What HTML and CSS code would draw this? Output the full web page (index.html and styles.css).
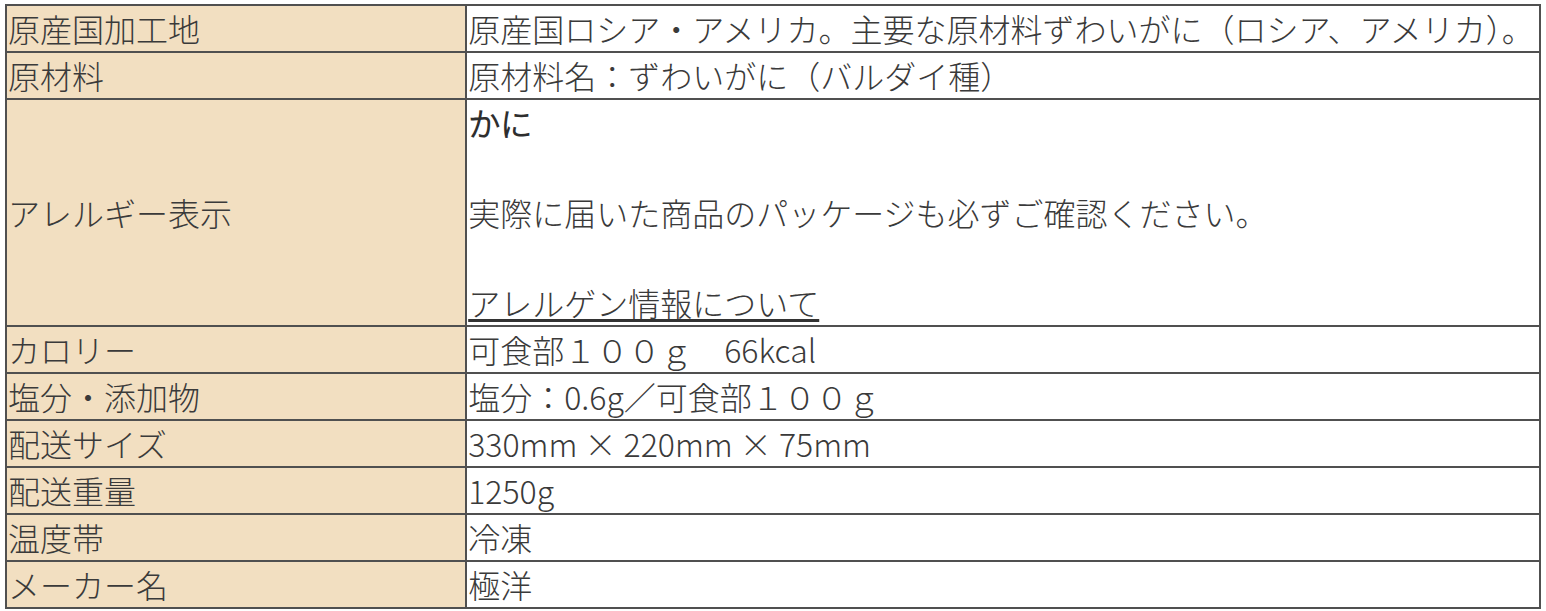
FILE: index.html
```html
<!DOCTYPE html>
<html lang="ja">
<head>
<meta charset="utf-8">
<title>商品情報</title>
<link rel="stylesheet" href="styles.css">
</head>
<body>
<table class="spec">
  <tbody>
    <tr><th class="label">原産国加工地</th><td class="value">原産国ロシア・アメリカ。主要な原材料ずわいがに（ロシア、アメリカ）。</td></tr>
    <tr><th class="label">原材料</th><td class="value">原材料名：ずわいがに（バルダイ種）</td></tr>
    <tr><th class="label">アレルギー表示</th><td class="value"><strong class="allergen">かに</strong><br><br>実際に届いた商品のパッケージも必ずご確認ください。<br><br><a class="link" href="#">アレルゲン情報について</a></td></tr>
    <tr><th class="label">カロリー</th><td class="value">可食部１００ｇ　66kcal</td></tr>
    <tr><th class="label">塩分・添加物</th><td class="value">塩分：0.6g／可食部１００ｇ</td></tr>
    <tr><th class="label">配送サイズ</th><td class="value">330mm × 220mm × 75mm</td></tr>
    <tr><th class="label">配送重量</th><td class="value">1250g</td></tr>
    <tr><th class="label">温度帯</th><td class="value">冷凍</td></tr>
    <tr><th class="label">メーカー名</th><td class="value">極洋</td></tr>
  </tbody>
</table>
</body>
</html>
```

FILE: styles.css
```css
html, body {
  margin: 0;
  padding: 0;
  background: #ffffff;
}

body {
  padding: 4px 5px 0 5px;
  font-family: "Noto Sans CJK JP Light", "Noto Sans CJK JP", "Noto Sans", sans-serif;
  font-weight: 300;
  color: #3a3a3a;
}

.spec {
  width: 100%;
  border-collapse: collapse;
  border: 2px solid #505050;
  font-size: 32px;
  line-height: 45px;
}

.label,
.value {
  border: 2px solid #505050;
  padding: 0 1px;
  text-align: left;
  vertical-align: middle;
  font-weight: 300;
}

.label {
  width: 30%;
  background: #f2dfc1;
}

.value {
  background: #ffffff;
}

.allergen {
  font-weight: 700;
  color: #2e2e2e;
}

.link {
  color: #3a3a3a;
  text-decoration: underline;
  text-decoration-thickness: 3px;
  text-underline-offset: 3px;
  text-decoration-color: #333333;
}
```
